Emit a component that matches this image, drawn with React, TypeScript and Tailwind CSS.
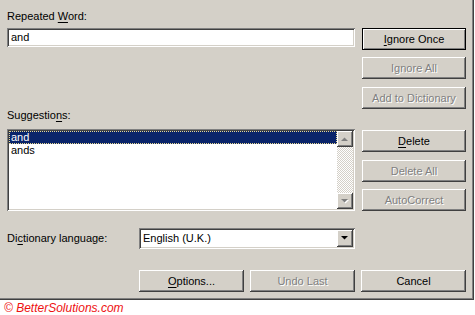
import React from "react";

const raised =
  "shadow-[inset_-1px_-1px_#404040,inset_1px_1px_#ffffff,inset_-2px_-2px_#808080,inset_2px_2px_#d4d0c8]";
const sunken =
  "shadow-[inset_1px_1px_#808080,inset_-1px_-1px_#ffffff,inset_2px_2px_#404040,inset_-2px_-2px_#d4d0c8]";

function Btn({
  children,
  disabled,
  def,
  className = "",
}: {
  children: React.ReactNode;
  disabled?: boolean;
  def?: boolean;
  className?: string;
}) {
  const border = def
    ? "shadow-[inset_0_0_0_1px_#000000,inset_1px_1px_0_1px_#ffffff,inset_-1px_-1px_0_1px_#808080]"
    : raised;
  return (
    <div
      className={`h-[22px] bg-[#d4d0c8] flex items-center justify-center font-normal ${border} ${
        disabled ? "text-[#808080] [text-shadow:1px_1px_0_#ffffff]" : "text-black"
      } ${className}`}
    >
      <span className="font-normal">{children}</span>
    </div>
  );
}

function Arrow({ dir, disabled }: { dir: "up" | "down"; disabled?: boolean }) {
  const pts = dir === "up" ? "0,4 7,4 3.5,0.5" : "0,0 7,0 3.5,3.5";
  return (
    <svg width="8" height="5" viewBox="0 0 8 5" className="block">
      {disabled && dir === "down" && (
        <polygon points="1,1 8,1 4.5,4.5" fill="#ffffff" />
      )}
      <polygon points={pts} fill={disabled ? "#808080" : "#000000"} />
    </svg>
  );
}

export default function App() {
  return (
    <div className="w-[475px] h-[315px] bg-white font-['Liberation_Sans',Arial,sans-serif] font-normal text-[11px] leading-[13px] text-black overflow-hidden">
      <div className="w-[474px] h-[300px] bg-[#d4d0c8] shadow-[inset_-1px_-1px_#404040,inset_-2px_-2px_#808080] pl-[7px] pt-[10px] flex flex-col">
        <div className="flex gap-[7px]">
          <div className="w-[348px] flex flex-col">
            <div className="h-[13px]">
              Repeated <u className="underline-offset-[2px]">W</u>ord:
            </div>
            <div className={`mt-[5px] h-[19px] bg-white ${sunken} pl-[4px] flex items-center`}>
              and
            </div>
            <div className="mt-[62px] h-[13px]">
              Suggestio<u className="underline-offset-[2px]">n</u>s:
            </div>
            <div className={`mt-[7px] h-[82px] bg-white ${sunken} p-[2px] flex`}>
              <div className="flex-1 flex flex-col">
                <div className="h-[13px] bg-[#0a246a] text-white pl-[1px] border border-dotted border-[#e8d890] leading-[11px]">
                  and
                </div>
                <div className="h-[13px] pl-[2px]">ands</div>
              </div>
              <div className="w-[16px] flex flex-col bg-[repeating-conic-gradient(#ffffff_0%_25%,#d4d0c8_0%_50%)] bg-[length:2px_2px]">
                <div className={`h-[16px] bg-[#d4d0c8] ${raised} flex items-center justify-center`}>
                  <Arrow dir="up" disabled />
                </div>
                <div className="flex-1" />
                <div className={`h-[16px] bg-[#d4d0c8] ${raised} flex items-center justify-center`}>
                  <Arrow dir="down" disabled />
                </div>
              </div>
            </div>
          </div>
          <div className="w-[104px] flex flex-col pt-[18px]">
            <Btn def>
              <u className="underline-offset-[2px]">I</u>gnore Once
            </Btn>
            <Btn disabled className="mt-[7px]">
              Ignore All
            </Btn>
            <Btn disabled className="mt-[8px]">
              Add to Dictionary
            </Btn>
            <Btn className="mt-[21px]">
              <u className="underline-offset-[2px]">D</u>elete
            </Btn>
            <Btn disabled className="mt-[8px]">
              Delete All
            </Btn>
            <Btn disabled className="mt-[7px]">
              AutoCorrect
            </Btn>
          </div>
        </div>

        <div className="mt-[17px] h-[21px] flex items-center">
          <div className="w-[132px]">
            Di<u className="underline-offset-[2px]">c</u>tionary language:
          </div>
          <div className={`w-[216px] h-[21px] bg-white ${sunken} p-[2px] flex`}>
            <div className="flex-1 pl-[2px] flex items-center">English (U.K.)</div>
            <div className={`w-[16px] bg-[#d4d0c8] ${raised} flex items-center justify-center`}>
              <Arrow dir="down" />
            </div>
          </div>
        </div>

        <div className="mt-[21px] flex gap-[6px] pl-[132px]">
          <Btn className="w-[105px]">
            <u className="underline-offset-[2px]">O</u>ptions...
          </Btn>
          <Btn disabled className="w-[105px]">
            Undo Last
          </Btn>
          <Btn className="w-[105px]">Cancel</Btn>
        </div>
      </div>
      <div className="pl-[4px] pt-[1px] text-[12px] leading-[14px] italic text-[#ee1111]">
        © BetterSolutions.com
      </div>
    </div>
  );
}
